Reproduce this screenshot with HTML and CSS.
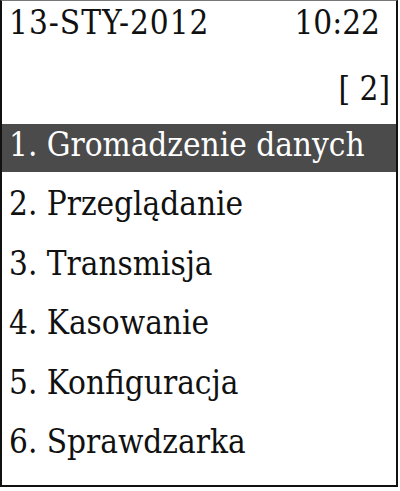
FILE: index.html
```html
<!DOCTYPE html>
<html lang="pl">
<head>
  <meta charset="UTF-8">
  <title>Menu</title>
  <link rel="stylesheet" href="styles.css">
</head>
<body>
  <div class="ekran">
    <div class="naglowek">
      <span class="data">13-STY-2012</span>
      <span>10:22</span>
    </div>
    <div class="strona">[ 2]</div>
    <ul class="menu">
      <li class="aktywny">1. Gromadzenie danych</li>
      <li>2. Przeglądanie</li>
      <li>3. Transmisja</li>
      <li>4. Kasowanie</li>
      <li>5. Konfiguracja</li>
      <li>6. Sprawdzarka</li>
    </ul>
  </div>
</body>
</html>
```

FILE: styles.css
```css
body {
  margin: 0;
  background: #fff;
}
.ekran {
  box-sizing: border-box;
  width: 398px;
  height: 487px;
  border: 2px solid #111;
  border-top: 1px solid #777;
  font-family: "DejaVu Serif", serif;
  font-stretch: condensed;
  font-size: 33px;
  color: #111;
  overflow: hidden;
}
.naglowek {
  display: flex;
  justify-content: space-between;
  height: 48px;
  line-height: 44px;
  padding: 0 16px 0 7px;
}
.data {
  letter-spacing: 1px;
}
.strona {
  box-sizing: border-box;
  text-align: right;
  height: 75px;
  padding: 10px 6px 0 0;
  line-height: 60px;
}
.menu {
  list-style: none;
  margin: 0;
  padding: 0;
}
.menu li {
  height: 59.4px;
  line-height: 41px;
  padding-left: 7px;
  white-space: nowrap;
}
.menu li.aktywny {
  background: #4b4b4b;
  color: #fff;
  height: 48px;
  margin-bottom: 11.4px;
}
```
